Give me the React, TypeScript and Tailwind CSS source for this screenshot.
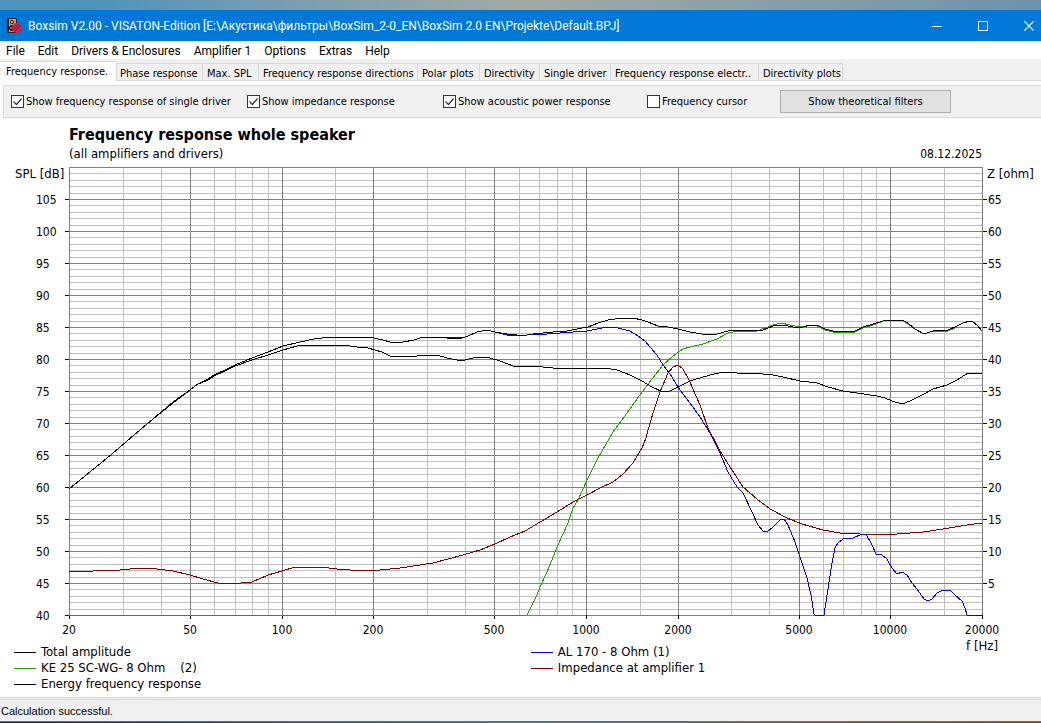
import type { ReactNode } from 'react';

const MENU = ['File', 'Edit', 'Drivers & Enclosures', 'Amplifier 1', 'Options', 'Extras', 'Help'];

const TABS = [
  { label: 'Phase response', width: 'w-[87px]' },
  { label: 'Max. SPL', width: 'w-[56px]' },
  { label: 'Frequency response directions', width: 'w-[159px]' },
  { label: 'Polar plots', width: 'w-[62px]' },
  { label: 'Directivity', width: 'w-[60px]' },
  { label: 'Single driver', width: 'w-[71px]' },
  { label: 'Frequency response electr..', width: 'w-[148px]' },
  { label: 'Directivity plots', width: 'w-[84px]' },
];

// plot area inside the svg
const LEFT = 69;
const RIGHT = 982;
const TOP = 4;
const BOTTOM = 452;

const xOf = (hz: number) => Math.round(LEFT + (Math.log10(hz / 20) * (RIGHT - LEFT)) / 3);
const yOf = (step: number) => Math.round(BOTTOM - (step * (BOTTOM - TOP)) / 70);

const MAJOR_HZ = [20, 50, 100, 200, 500, 1000, 2000, 5000, 10000, 20000];
const MINOR_HZ = [
  30, 40, 60, 70, 80, 90, 150, 300, 400, 600, 700, 800, 900, 1500, 3000, 4000, 6000, 7000, 8000,
  9000, 15000,
];
const STEPS = Array.from({ length: 71 }, (_, i) => i);
const TICKS = Array.from({ length: 14 }, (_, i) => i * 5);

const CURVES = [
  {
    color: '#800000',
    points:
      '69,409 93,408 120,407 140,405 157,406 173,408 190,412 203,416 218,420 230,421 252,419 268,412 282,408 295,404 320,404 337,406 350,407 380,407 400,405 433,400 463,392 480,387 495,381 510,374 525,368 540,359 557,349 573,339 587,332 600,325 613,319 623,311 633,300 642,285 646,275 650,260 655,244 660,229 668,210 673,204 678,202 683,206 689,217 700,242 708,265 720,288 732,307 743,324 757,336 770,346 787,355 802,361 823,367 840,370 860,371 890,372 897,371 910,370 923,369 943,366 967,362 982,360',
  },
  {
    color: '#0000e0',
    points:
      '440,174 462,175 468,173 477,169 487,167 495,169 507,172 517,172 527,172 547,171 560,170 587,168 597,166 607,164 618,165 630,168 638,173 645,178 650,184 657,192 663,202 670,211 678,224 690,240 700,254 710,270 720,290 728,309 737,324 743,330 752,349 758,362 763,368 767,369 773,364 780,357 784,356 788,362 795,379 800,394 807,415 811,432 814,451 815,452 824,452 827,432 832,400 835,385 838,380 843,376 853,375 862,371 866,371 872,382 876,391 882,392 887,396 892,405 897,411 902,409 907,412 912,420 917,426 924,436 928,438 932,436 937,430 943,427 950,427 955,432 962,438 965,445 967,452 982,452',
  },
  {
    color: '#20a000',
    points:
      '69,452 527,452 537,432 540,424 547,409 558,382 568,360 573,345 578,337 587,317 598,295 613,269 627,250 642,229 652,216 663,202 673,193 683,186 690,184 703,181 717,176 728,170 738,168 757,168 773,162 781,160 790,162 800,164 813,162 817,163 825,167 833,169 850,170 855,169 863,165 873,162 883,158 890,157 902,157 908,161 915,166 924,171 933,168 943,168 948,168 957,164',
  },
  {
    color: '#000000',
    points:
      '69,326 112,291 134,272 153,256 173,240 190,227 198,221 208,216 214,212 227,206 235,202 252,195 268,189 283,183 300,179 314,176 330,174 369,174 383,177 390,179 403,179 414,177 423,174 438,174 447,175 462,175 468,173 477,169 487,167 495,169 507,171 517,172 527,172 533,171 553,169 567,168 577,166 588,164 598,160 608,157 623,155 633,155 642,157 648,159 658,163 668,164 678,166 690,169 708,172 717,171 728,168 740,167 757,168 763,167 773,163 783,162 793,164 803,164 810,162 817,162 825,166 833,168 850,169 855,168 863,164 873,161 883,158 890,157 902,157 908,160 915,166 924,171 933,168 943,167 948,167 957,163 963,160 970,158 973,159 977,162 982,168',
  },
  {
    color: '#000000',
    points:
      '69,326 112,291 134,272 153,256 173,239 190,227 198,221 208,217 214,213 227,207 235,203 252,197 268,192 283,187 297,183 307,182 337,182 350,183 357,184 368,185 382,189 390,193 403,194 417,193 437,192 447,195 457,197 465,197 473,195 482,194 490,195 500,198 513,203 527,204 533,203 553,205 587,206 605,205 617,207 630,212 642,218 652,224 663,229 670,228 678,224 690,218 693,217 710,212 723,209 737,210 753,210 773,212 783,214 800,218 817,220 828,224 843,228 857,230 877,233 885,235 892,238 902,241 910,238 922,232 933,226 947,222 957,217 968,210 976,211 982,210',
  },
];

function AppIcon() {
  return (
    <svg viewBox="0 0 16 16" className="h-4 w-4" aria-hidden="true">
      <path d="M1 0h9l1 1v14H2l-1-1z" fill="#3a1c14" />
      <path d="M3 1h7v13H3z" fill="#c8a070" />
      <circle cx="6" cy="4" r="2" fill="#181010" />
      <circle cx="6" cy="4" r="1" fill="#e8e0d0" />
      <circle cx="6" cy="10" r="3" fill="#181010" />
      <circle cx="5" cy="10" r="1" fill="#b09070" />
      <circle cx="11" cy="10" r="5" fill="#d02048" />
      <path d="M7.5 11.5l5.5-5.5M8.5 13.5l6.5-6.5" stroke="#8c1838" />
    </svg>
  );
}

function TitleBar() {
  return (
    <header className="flex h-[31px] items-center bg-[#0078d7] text-white">
      <div className="flex min-w-0 flex-1 items-center gap-1.5 pl-1.5">
        <AppIcon />
        <h1 className="truncate font-[Roboto,sans-serif] text-xs">
          Boxsim V2.00 - VISATON-Edition [E:\Акустика\фильтры\BoxSim_2-0_EN\BoxSim 2.0
          EN\Projekte\Default.BPJ]
        </h1>
      </div>
      <div className="flex">
        <button aria-label="Minimize" className="flex w-[46px] justify-center">
          <svg viewBox="0 0 10 10" className="size-2.5" shapeRendering="crispEdges">
            <path d="M0 5h10v1H0z" fill="#fff" />
          </svg>
        </button>
        <button aria-label="Maximize" className="flex w-[46px] justify-center">
          <svg viewBox="0 0 10 10" className="size-2.5" shapeRendering="crispEdges">
            <path d="M0 0h10v10H0zM1 1v8h8V1z" fill="#fff" fillRule="evenodd" />
          </svg>
        </button>
        <button aria-label="Close" className="flex w-[35px] justify-end pr-[7px] pl-4">
          <svg viewBox="0 0 10 10" className="size-2.5 shrink-0">
            <path d="M0 0l10 10M10 0L0 10" stroke="#fff" strokeWidth="1.2" />
          </svg>
        </button>
      </div>
    </header>
  );
}

function MenuBar() {
  return (
    <nav className="flex h-[18px] items-center gap-[13px] bg-white pt-0.5 pl-1.5 font-[Roboto,sans-serif] text-xs">
      {MENU.map((item) => (
        <button key={item} className="whitespace-nowrap">
          {item}
        </button>
      ))}
    </nav>
  );
}

function Tabs() {
  return (
    <div role="tablist" className="flex h-[26px] items-end bg-[#f0f0f0] whitespace-nowrap">
      <button
        role="tab"
        aria-selected="true"
        className="h-6 w-[116px] border-t border-[#d9d9d9] bg-white pb-0.5 pl-1.5 text-left"
      >
        Frequency response.
      </button>
      <div className="flex h-[22px] flex-1 border-b-4 border-white">
        <div className="flex flex-1 border-b border-[#d9d9d9]">
          {TABS.map((tab) => (
            <button
              key={tab.label}
              role="tab"
              aria-selected="false"
              className={`${tab.width} border-t border-r border-[#d9d9d9] pt-0.5 pl-1 text-left first:border-l first:pl-[3px]`}
            >
              {tab.label}
            </button>
          ))}
        </div>
      </div>
    </div>
  );
}

function Check({
  className,
  defaultChecked,
  children,
}: {
  className: string;
  defaultChecked?: boolean;
  children: ReactNode;
}) {
  return (
    <label className={`flex items-center gap-0.5 whitespace-nowrap ${className}`}>
      <span className="grid">
        <input
          type="checkbox"
          defaultChecked={defaultChecked}
          className="peer col-start-1 row-start-1 size-[13px] appearance-none border border-[#333] bg-white"
        />
        <svg
          viewBox="0 0 13 13"
          className="pointer-events-none invisible col-start-1 row-start-1 size-[13px] peer-checked:visible"
        >
          <path d="M2.5 6.5l3 3 5-6" fill="none" stroke="#333" strokeWidth="1.2" />
        </svg>
      </span>
      <span className="pt-0.5">{children}</span>
    </label>
  );
}

function Toolbar() {
  return (
    <div className="bg-white pl-[3px]">
      <div className="flex h-[33px] items-center border-y border-l border-[#d9d9d9] bg-[#f0f0f0] pl-[7px]">
        <Check className="w-[236px]" defaultChecked>
          Show frequency response of single driver
        </Check>
        <Check className="w-[196px]" defaultChecked>
          Show impedance response
        </Check>
        <Check className="w-[204px]" defaultChecked>
          Show acoustic power response
        </Check>
        <Check className="w-[133px]">Frequency cursor</Check>
        <button className="h-[23px] w-[171px] border border-[#adadad] bg-[#e1e1e1] pt-0.5">
          Show theoretical filters
        </button>
      </div>
    </div>
  );
}

function Plot() {
  return (
    <svg
      viewBox="0 0 1041 475"
      className="block h-auto w-full font-['DejaVu_Sans_Condensed',sans-serif] text-xs"
      role="img"
      aria-label="Frequency response whole speaker"
    >
      <g shapeRendering="crispEdges" fill="none">
        {STEPS.map((s) => (
          <path key={s} d={`M${LEFT} ${yOf(s)}H${RIGHT}`} stroke="#c0c0c0" />
        ))}
        {MINOR_HZ.map((hz) => (
          <path key={hz} d={`M${xOf(hz)} ${TOP}V${BOTTOM}`} stroke="#c0c0c0" />
        ))}
        {[...TICKS, 70].map((s) => (
          <path key={s} d={`M${LEFT} ${yOf(s)}H${RIGHT}`} stroke="#808080" />
        ))}
        {MAJOR_HZ.map((hz) => (
          <path key={hz} d={`M${xOf(hz)} ${TOP}V${BOTTOM}`} stroke="#808080" />
        ))}
        {TICKS.map((s) => (
          <path key={s} d={`M65 ${yOf(s)}h4`} stroke="#000" />
        ))}
        {TICKS.slice(1).map((s) => (
          <path key={s} d={`M983 ${yOf(s)}h4`} stroke="#000" />
        ))}
        {MAJOR_HZ.map((hz) => (
          <path key={hz} d={`M${xOf(hz)} ${BOTTOM}v4`} stroke="#000" />
        ))}
        {CURVES.map((curve, i) => (
          <polyline key={i} points={curve.points} stroke={curve.color} />
        ))}
      </g>
      <g className="text-[13px]">
        <text x="15" y="15">
          SPL [dB]
        </text>
        <text x="987" y="15">
          Z [ohm]
        </text>
      </g>
      {TICKS.map((s) => (
        <text key={s} x="36" y={yOf(s) + 5}>
          {40 + s}
        </text>
      ))}
      {TICKS.slice(1).map((s) => (
        <text key={s} x="988" y={yOf(s) + 5}>
          {s}
        </text>
      ))}
      {MAJOR_HZ.map((hz) => (
        <text key={hz} x={xOf(hz)} y="471" textAnchor="middle">
          {hz}
        </text>
      ))}
    </svg>
  );
}

function LegendItem({ line, children }: { line: string; children: ReactNode }) {
  return (
    <li className="flex h-4 items-center gap-[5px] whitespace-pre">
      <span className={`h-px w-[22px] ${line}`} />
      {children}
    </li>
  );
}

function Legend() {
  return (
    <div className="grid grid-cols-[19fr_16fr_auto] pr-[43px] pl-3.5 text-[13px] leading-4">
      <ul className="pt-1.5">
        <LegendItem line="bg-black">Total amplitude</LegendItem>
        <LegendItem line="bg-[#20a000]">{'KE 25 SC-WG- 8 Ohm    (2)'}</LegendItem>
        <LegendItem line="bg-black">Energy frequency response</LegendItem>
      </ul>
      <ul className="pt-1.5">
        <LegendItem line="bg-[#0000e0]">AL 170 - 8 Ohm (1)</LegendItem>
        <LegendItem line="bg-[#800000]">Impedance at amplifier 1</LegendItem>
      </ul>
      <p>f [Hz]</p>
    </div>
  );
}

export default function App() {
  return (
    <div className="flex min-h-screen flex-col bg-white font-['DejaVu_Sans_Condensed',sans-serif] text-[11px] text-black">
      <div className="h-2.5 bg-linear-to-r from-[#4f94bc] from-10% via-[#a3a9a2] via-50% to-[#6c93ad]" />
      <TitleBar />
      <MenuBar />
      <Tabs />
      <Toolbar />
      <main className="flex-1">
        <div className="flex items-end justify-between pt-[7px] pr-[59px] pl-[69px]">
          <div>
            <h2 className="text-base leading-5 font-bold">Frequency response whole speaker</h2>
            <p className="text-[13px] leading-[18px]">(all amplifiers and drivers)</p>
          </div>
          <p className="text-xs leading-[18px]">08.12.2025</p>
        </div>
        <Plot />
        <Legend />
      </main>
      <footer className="h-[26px] border-t border-[#d9d9d9] bg-[#f0f0f0] pt-px">
        <p className="h-[22px] border-t border-[#d9d9d9] pt-[3px] pl-px font-['Liberation_Sans',sans-serif]">
          Calculation successful.
        </p>
        <div className="h-0.5 border-t border-[#1883d7] bg-linear-to-r from-[#1c2c34] via-[#4a7484] to-[#7a4a1c]" />
      </footer>
    </div>
  );
}
